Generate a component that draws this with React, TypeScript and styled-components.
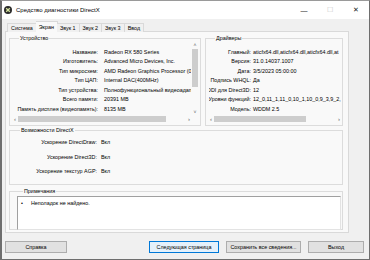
import { Fragment } from 'react';
import styled, { createGlobalStyle } from 'styled-components';

const GlobalStyle = createGlobalStyle`
  html, body {
    margin: 0;
    padding: 0;
  }
  body {
    width: 370px;
    height: 260px;
    overflow: hidden;
    background: #f0f0f0;
    font-family: 'Liberation Sans', Arial, sans-serif;
    font-size: 5.4px;
    color: #000;
  }
`;

const Window = styled.div`
  width: 370px;
  height: 260px;
  box-sizing: border-box;
  border: 1px solid #6e6e6e;
  border-left-width: 2px;
  border-top-color: #9a9a9a;
  background: #f0f0f0;
  display: flex;
  flex-direction: column;
`;

const TitleBar = styled.div`
  height: 18px;
  background: #fff;
  display: flex;
  align-items: center;
  padding-left: 2px;
  font-size: 6px;
`;

const Title = styled.span`
  margin-left: 4px;
  flex: 1;
`;

const Caption = styled.span<{ $dim?: boolean }>`
  width: 26px;
  text-align: center;
  font-size: 7px;
  color: ${(p) => (p.$dim ? '#c4c4c4' : '#222')};
`;

const Body = styled.div`
  flex: 1;
  display: flex;
  flex-direction: column;
  padding: 2px 0 0 3px;
`;

const TabStrip = styled.div`
  display: flex;
  align-items: flex-end;
  height: 11px;
  padding-left: 2px;
  position: relative;
  z-index: 1;
`;

const Tab = styled.div<{ $active?: boolean }>`
  height: ${(p) => (p.$active ? '11px' : '9px')};
  line-height: ${(p) => (p.$active ? '10px' : '9px')};
  padding: 0 3px;
  margin: 0 ${(p) => (p.$active ? '-1px' : '0')};
  box-sizing: border-box;
  border: 1px solid #d9d9d9;
  border-bottom: ${(p) => (p.$active ? '1px solid #f9f9f9' : 'none')};
  background: ${(p) => (p.$active ? '#f9f9f9' : '#f0f0f0')};
  & + & {
    border-left: none;
  }
`;

const Panel = styled.div`
  width: 344px;
  height: 202px;
  margin-top: -1px;
  box-sizing: border-box;
  border: 1px solid #d9d9d9;
  background: #f9f9f9;
  padding: 3px 5px 0 3px;
  display: flex;
  flex-direction: column;
  gap: 1px;
`;

const TopRow = styled.div`
  display: grid;
  grid-template-columns: 192px 138px;
  gap: 4px;
`;

const Group = styled.fieldset`
  margin: 0;
  height: 91px;
  box-sizing: border-box;
  border: 1px solid #dcdcdc;
  padding: 0 1px 2px 3px;
  min-width: 0;
  display: flex;
  flex-direction: column;
`;

const Legend = styled.legend`
  padding: 0 1px;
  margin-left: 6px;
  line-height: 7px;
`;

const ScrollView = styled.div<{ $vbar?: boolean }>`
  flex: 1;
  display: grid;
  grid-template-columns: 1fr ${(p) => (p.$vbar ? '8px' : '0')};
  grid-template-rows: 1fr 8px;
  min-height: 0;
`;

const Content = styled.div`
  overflow: hidden;
  padding-top: 5px;
`;

const Rows = styled.div<{ $label: number; $gap: number }>`
  display: grid;
  grid-template-columns: ${(p) => p.$label}px max-content;
  column-gap: ${(p) => p.$gap}px;
  grid-auto-rows: 9.5px;
  align-items: center;
  white-space: nowrap;
`;

const Label = styled.div`
  display: flex;
  justify-content: flex-end;
  overflow: hidden;
`;

const VBar = styled.div`
  display: flex;
  flex-direction: column;
  align-items: center;
  font-size: 5px;
  color: #606060;
`;

const Thumb = styled.div<{ $v?: boolean }>`
  background: #cdcdcd;
  ${(p) => (p.$v ? 'width: 6px; height: 38px; margin-top: 1px;' : 'height: 6px;')}
`;

const HBar = styled.div`
  display: flex;
  align-items: center;
  gap: 2px;
  font-size: 6px;
  color: #606060;
  padding: 0 1px;
`;

const Track = styled.div`
  flex: 1;
  display: flex;
`;

const Caps = styled.fieldset`
  margin: 0;
  height: 58px;
  border: 1px solid #dcdcdc;
  padding: 0 0 0 4px;
  width: 334px;
  box-sizing: border-box;
`;

const CapRows = styled.div`
  display: grid;
  grid-template-columns: 83px max-content;
  column-gap: 4px;
  grid-auto-rows: 14.5px;
  align-items: center;
  margin-top: 1px;
  white-space: nowrap;
  & > :nth-child(odd) {
    text-align: right;
  }
`;

const Notes = styled.fieldset`
  margin: 2px 0 0;
  height: 42px;
  width: 334px;
  box-sizing: border-box;
  border: 1px solid #dcdcdc;
  padding: 1px 1px 0 7px;
`;

const NotesBox = styled.div`
  height: 29px;
  background: #fff;
  border: 1px solid #a0a0a0;
  border-right-color: #e3e3e3;
  border-bottom-color: #e3e3e3;
  padding: 3px 0 0 3px;
  display: flex;
  gap: 8px;
`;

const Buttons = styled.div`
  display: flex;
  align-items: center;
  margin-top: 8px;
  padding-right: 5px;
  gap: 7px;
`;

const Button = styled.div<{ $w: number; $focus?: boolean }>`
  width: ${(p) => p.$w}px;
  height: 12px;
  box-sizing: border-box;
  display: flex;
  align-items: center;
  justify-content: center;
  background: ${(p) => (p.$focus ? '#e5f1fb' : '#e1e1e1')};
  border: 1px solid ${(p) => (p.$focus ? '#0078d7' : '#adadad')};
`;

const Spacer = styled.div`
  flex: 1;
`;

const DxIcon = () => (
  <svg width="8" height="8" viewBox="0 0 8 8">
    <circle cx="4" cy="4" r="4" fill="#2b2b2b" />
    <path d="M2.2 2.2 L5.8 5.8 M5.8 2.2 L2.2 5.8" stroke="#d8e6a0" strokeWidth="1.3" />
  </svg>
);

const device: [string, string][] = [
  ['Название:', 'Radeon RX 580 Series'],
  ['Изготовитель:', 'Advanced Micro Devices, Inc.'],
  ['Тип микросхем:', 'AMD Radeon Graphics Processor (0x6'],
  ['Тип ЦАП:', 'Internal DAC(400MHz)'],
  ['Тип устройства:', 'Полнофункциональный видеоадапт'],
  ['Всего памяти:', '20391 MB'],
  ['Память дисплея (видеопамять):', '8135 MB'],
];

const drivers: [string, string][] = [
  ['Главный:', 'aticfx64.dll,aticfx64.dll,aticfx64.dll,at'],
  ['Версия:', '31.0.14037.1007'],
  ['Дата:', '3/5/2023 05:00:00'],
  ['Подпись WHQL:', 'Да'],
  ['DDI для Direct3D:', '12'],
  ['Уровни функций:', '12_0,11_1,11_0,10_1,10_0,9_3,9_2,'],
  ['Модель:', 'WDDM 2.5'],
];

const caps: [string, string][] = [
  ['Ускорение DirectDraw:', 'Вкл'],
  ['Ускорение Direct3D:', 'Вкл'],
  ['Ускорение текстур AGP:', 'Вкл'],
];

const HScroll = ({ thumb }: { thumb: number }) => (
  <HBar>
    <span>‹</span>
    <Track>
      <Thumb style={{ flex: `0 0 ${thumb}%` }} />
    </Track>
    <span>›</span>
  </HBar>
);

const InfoRows = ({ data, label, gap }: { data: [string, string][]; label: number; gap: number }) => (
  <Rows $label={label} $gap={gap}>
    {data.map(([k, v]) => (
      <Fragment key={k}>
        <Label>{k}</Label>
        <div>{v}</div>
      </Fragment>
    ))}
  </Rows>
);

export default function App() {
  return (
    <>
      <GlobalStyle />
      <Window>
        <TitleBar>
          <DxIcon />
          <Title>Средство диагностики DirectX</Title>
          <Caption>—</Caption>
          <Caption $dim>☐</Caption>
          <Caption>✕</Caption>
        </TitleBar>
        <Body>
          <TabStrip>
            <Tab>Система</Tab>
            <Tab $active>Экран</Tab>
            <Tab>Звук 1</Tab>
            <Tab>Звук 2</Tab>
            <Tab>Звук 3</Tab>
            <Tab>Ввод</Tab>
          </TabStrip>
          <Panel>
            <TopRow>
              <Group>
                <Legend>Устройство</Legend>
                <ScrollView $vbar>
                  <Content>
                    <InfoRows data={device} label={85} gap={6} />
                  </Content>
                  <VBar>
                    <span>˄</span>
                    <Thumb $v />
                    <Spacer />
                    <span>˅</span>
                  </VBar>
                  <HScroll thumb={88} />
                </ScrollView>
              </Group>
              <Group>
                <Legend>Драйверы</Legend>
                <ScrollView>
                  <Content>
                    <InfoRows data={drivers} label={42} gap={2} />
                  </Content>
                  <div />
                  <HScroll thumb={75} />
                </ScrollView>
              </Group>
            </TopRow>
            <Caps>
              <Legend>Возможности DirectX</Legend>
              <CapRows>
                {caps.map(([k, v]) => (
                  <Fragment key={k}>
                    <div>{k}</div>
                    <div>{v}</div>
                  </Fragment>
                ))}
              </CapRows>
            </Caps>
            <Notes>
              <Legend>Примечания</Legend>
              <NotesBox>
                <span>•</span>
                <span>Неполадок не найдено.</span>
              </NotesBox>
            </Notes>
          </Panel>
          <Buttons>
            <Button $w={62}>Справка</Button>
            <Spacer />
            <Button $w={70} $focus>
              Следующая страница
            </Button>
            <Button $w={75}>Сохранить все сведения...</Button>
            <Button $w={56}>Выход</Button>
          </Buttons>
        </Body>
      </Window>
    </>
  );
}
